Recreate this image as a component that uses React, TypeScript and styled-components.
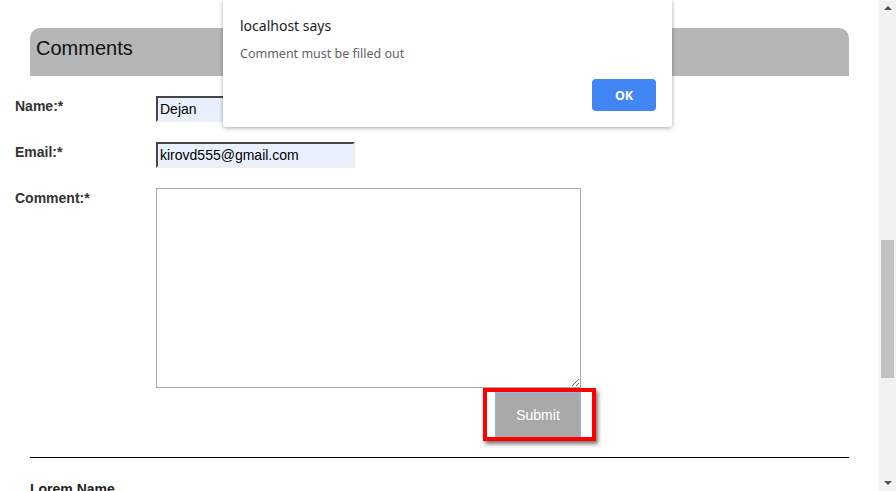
import React from "react";
import styled, { createGlobalStyle } from "styled-components";

const Global = createGlobalStyle`
  html, body {
    margin: 0;
    padding: 0;
    background: #fff;
    overflow: hidden;
  }
  body {
    font-family: "Liberation Sans", Arial, sans-serif;
  }
`

const Window = styled.div`
  position: relative;
  display: flex;
  width: 896px;
  height: 491px;
  overflow: hidden;
`

const Page = styled.div`
  flex: 1;
  padding-top: 28px;
`

const SectionHeader = styled.h2`
  margin: 0 30px;
  height: 48px;
  box-sizing: border-box;
  padding: 8px 0 0 6px;
  background: #b5b6b8;
  border-radius: 10px 10px 0 0;
  font-size: 20px;
  line-height: 24px;
  font-weight: normal;
  color: #111;
`

const Form = styled.form`
  display: grid;
  grid-template-columns: 141px auto;
  row-gap: 20px;
  padding: 20px 0 0 15px;
  justify-items: start;
`

const Label = styled.label`
  font-size: 14px;
  font-weight: bold;
  color: #333;
  padding-top: 2px;
`

const Input = styled.input<{ $width: number }>`
  box-sizing: border-box;
  width: ${p => p.$width}px;
  height: 26px;
  margin: 0;
  padding: 1px 2px;
  border: 2px inset #eee;
  border-top-color: #9a9a9a;
  border-left-color: #9a9a9a;
  background: #e8f0fe;
  font-family: "Liberation Sans", Arial, sans-serif;
  font-size: 14px;
  color: #000;
`

const TextArea = styled.textarea`
  box-sizing: border-box;
  width: 425px;
  height: 200px;
  margin: 0;
  border: 1px solid #a9a9a9;
  background: #fff;
`

const ButtonCell = styled.div`
  grid-column: 2;
  width: 425px;
  display: flex;
  justify-content: flex-end;
  margin-top: -16px;
`

const SubmitButton = styled.button`
  width: 86px;
  height: 46px;
  background: #a9a9a9;
  border: 1px solid #8ab4f8;
  color: #fff;
  font-family: "Liberation Sans", Arial, sans-serif;
  font-size: 14px;
`

const Divider = styled.hr`
  margin: 19px 30px 0;
  border: none;
  border-top: 1px solid #000;
`

const AuthorName = styled.h3`
  margin: 23px 0 0 30px;
  font-size: 14px;
  font-weight: bold;
  color: #222;
`

const Highlight = styled.div`
  position: absolute;
  left: 483px;
  top: 388px;
  width: 105px;
  height: 45px;
  border: 4px solid #ff0000;
  box-shadow: 2px 3px 4px rgba(0, 0, 0, 0.55);
  pointer-events: none;
`

const Dialog = styled.div`
  position: absolute;
  left: 223px;
  top: 0;
  width: 449px;
  height: 127px;
  box-sizing: border-box;
  padding: 16px 16px 0 17px;
  background: #fff;
  border-radius: 0 0 3px 3px;
  box-shadow: 0 1px 4px rgba(0, 0, 0, 0.35);
  font-family: "Noto Sans", "Open Sans", sans-serif;
  display: flex;
  flex-direction: column;
`

const DialogTitle = styled.div`
  font-size: 14px;
  color: #202124;
`

const DialogMessage = styled.div`
  margin-top: 10px;
  font-size: 12.5px;
  color: #5f6368;
`

const DialogActions = styled.div`
  display: flex;
  justify-content: flex-end;
  margin-top: 17px;
`

const OkButton = styled.button`
  width: 64px;
  height: 32px;
  border: none;
  border-radius: 4px;
  background: #4285f4;
  color: #fff;
  font-family: "Noto Sans", "Open Sans", sans-serif;
  font-size: 12.5px;
  font-weight: bold;
`

const Scrollbar = styled.div`
  width: 17px;
  background: #f1f1f1;
  display: flex;
  flex-direction: column;
  align-items: center;
`

const Arrow = styled.div<{ $down?: boolean }>`
  width: 0;
  height: 0;
  margin: 6px 0;
  border-left: 4px solid transparent;
  border-right: 4px solid transparent;
  ${p => p.$down ? "border-top: 4px solid #505050;" : "border-bottom: 4px solid #505050;"}
`

const Track = styled.div`
  flex: 1;
  width: 100%;
  display: flex;
  flex-direction: column;
  align-items: center;
  padding-top: 224px;
`

const Thumb = styled.div`
  width: 13px;
  height: 138px;
  background: #c1c1c1;
`

export default function App() {
    return (
        <>
            <Global/>
            <Window>
                <Page>
                    <SectionHeader>Comments</SectionHeader>
                    <Form onSubmit={e => e.preventDefault()}>
                        <Label>Name:*</Label>
                        <Input $width={170} defaultValue="Dejan"/>
                        <Label>Email:*</Label>
                        <Input $width={199} defaultValue="kirovd555@gmail.com"/>
                        <Label>Comment:*</Label>
                        <TextArea/>
                        <ButtonCell>
                            <SubmitButton type="submit">Submit</SubmitButton>
                        </ButtonCell>
                    </Form>
                    <Divider/>
                    <AuthorName>Lorem Name</AuthorName>
                </Page>
                <Scrollbar>
                    <Arrow/>
                    <Track>
                        <Thumb/>
                    </Track>
                    <Arrow $down/>
                </Scrollbar>
                <Highlight/>
                <Dialog>
                    <DialogTitle>localhost says</DialogTitle>
                    <DialogMessage>Comment must be filled out</DialogMessage>
                    <DialogActions>
                        <OkButton>OK</OkButton>
                    </DialogActions>
                </Dialog>
            </Window>
        </>
    )
}
